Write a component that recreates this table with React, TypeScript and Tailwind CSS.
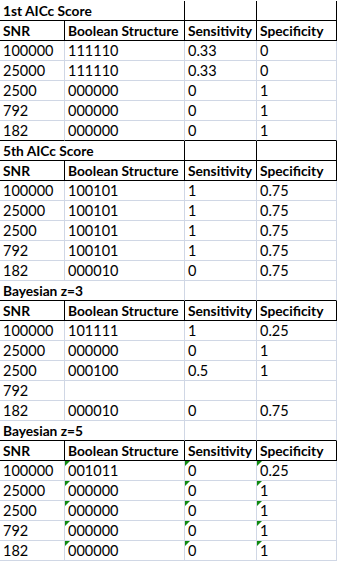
import React from 'react';
import clsx from 'clsx';

interface Section {
  title: string;
  boxedTitle: boolean;
  blackBelowLast: boolean;
  marks: boolean;
  rows: string[][];
}

const sections: Section[] = [
  {
    title: '1st AICc Score',
    boxedTitle: true,
    blackBelowLast: true,
    marks: false,
    rows: [
      ['100000', '111110', '0.33', '0'],
      ['25000', '111110', '0.33', '0'],
      ['2500', '000000', '0', '1'],
      ['792', '000000', '0', '1'],
      ['182', '000000', '0', '1'],
    ],
  },
  {
    title: '5th AICc Score',
    boxedTitle: true,
    blackBelowLast: false,
    marks: false,
    rows: [
      ['100000', '100101', '1', '0.75'],
      ['25000', '100101', '1', '0.75'],
      ['2500', '100101', '1', '0.75'],
      ['792', '100101', '1', '0.75'],
      ['182', '000010', '0', '0.75'],
    ],
  },
  {
    title: 'Bayesian z=3',
    boxedTitle: false,
    blackBelowLast: false,
    marks: false,
    rows: [
      ['100000', '101111', '1', '0.25'],
      ['25000', '000000', '0', '1'],
      ['2500', '000100', '0.5', '1'],
      ['792', '', '', ''],
      ['182', '000010', '0', '0.75'],
    ],
  },
  {
    title: 'Bayesian z=5',
    boxedTitle: false,
    blackBelowLast: false,
    marks: true,
    rows: [
      ['100000', '001011', '0', '0.25'],
      ['25000', '000000', '0', '1'],
      ['2500', '000000', '0', '1'],
      ['792', '000000', '0', '1'],
      ['182', '000000', '0', '1'],
    ],
  },
];

const headers = ['SNR', 'Boolean Structure', 'Sensitivity', 'Specificity'];

interface CellProps {
  children?: React.ReactNode;
  bold?: boolean;
  rightBlack?: boolean;
  bottomBlack?: boolean;
  mark?: boolean;
  span?: boolean;
}

const Cell: React.FC<CellProps> = ({ children, bold, rightBlack, bottomBlack, mark, span }) => (
  <div
    className={clsx(
      'relative flex h-5 items-end overflow-visible whitespace-nowrap border-b border-r pl-[3px] leading-none',
      span && 'col-span-2',
      rightBlack ? 'border-r-black' : 'border-r-[#d0d7e5]',
      bottomBlack ? 'border-b-black' : 'border-b-[#d0d7e5]',
      bold ? 'text-[13.75px] font-bold' : 'text-[14.5px]'
    )}
  >
    {mark && (
      <span className="absolute left-0 top-0 h-0 w-0 border-r-[5px] border-t-[5px] border-r-transparent border-t-[#108a10]" />
    )}
    <span className="pb-[2px]">{children}</span>
  </div>
);

export default function App() {
  return (
    <div className="min-h-[565px] w-[340px] bg-white pt-px text-black [font-family:Lato,'Liberation_Sans',sans-serif]">
      <div className="grid w-[337px] grid-cols-[65px_120px_72px_80px]">
        {sections.map((sec) => (
          <React.Fragment key={sec.title}>
            {/* title row */}
            <Cell span bold bottomBlack rightBlack={sec.boxedTitle}>
              {sec.title}
            </Cell>
            <Cell bottomBlack rightBlack={sec.boxedTitle} />
            <Cell bottomBlack rightBlack={sec.boxedTitle} />

            {/* header row */}
            {headers.map((h) => (
              <Cell key={h} bold rightBlack bottomBlack>
                {h}
              </Cell>
            ))}

            {/* data rows */}
            {sec.rows.map((row, ri) =>
              row.map((val, ci) => (
                <Cell
                  key={`${ri}-${ci}`}
                  bottomBlack={sec.blackBelowLast && ri === sec.rows.length - 1}
                  mark={sec.marks && ci > 0}
                >
                  {val}
                </Cell>
              ))
            )}
          </React.Fragment>
        ))}
      </div>
    </div>
  );
}
